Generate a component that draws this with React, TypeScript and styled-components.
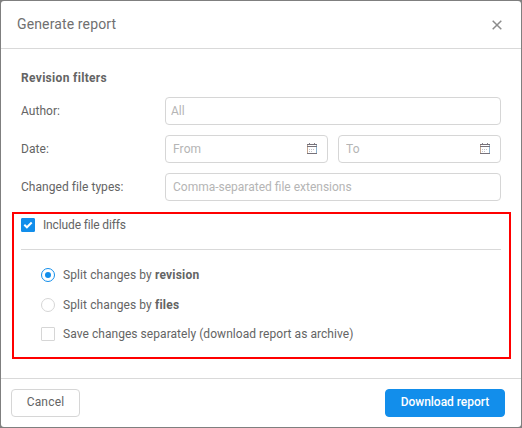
import React from "react";
import styled, { createGlobalStyle } from "styled-components";

const GlobalStyle = createGlobalStyle`
  *, *::before, *::after { box-sizing: border-box; }
  body { margin: 0; background: #7f7f7f; overflow: hidden; }
  button, input { font: inherit; letter-spacing: inherit; }
`;

const Backdrop = styled.div`
  height: 428px;
  padding: 1px;
  background: #7f7f7f;
`;

const Dialog = styled.section`
  display: flex;
  flex-direction: column;
  height: 426px;
  border-radius: 3px;
  background: #fff;
  color: #646464;
  font: 12px/16px Roboto, "Liberation Sans", sans-serif;
  letter-spacing: 0.05px;
`;

const Header = styled.header`
  display: flex;
  align-items: center;
  justify-content: space-between;
  height: 48px;
  padding: 0 18px 0 16px;
  border-bottom: 1px solid #d9d9d9;
`;

const Title = styled.h1`
  margin: 0;
  padding-bottom: 2px;
  font-size: 14px;
  font-weight: 400;
  letter-spacing: 0.13px;
  color: #707070;
`;

const CloseButton = styled.button`
  display: flex;
  padding: 0;
  border: 0;
  background: none;
  color: #8c8c8c;
`;

const Filters = styled.div`
  padding: 21px 20px 0 20px;
`;

const SectionTitle = styled.h2`
  margin: 0 0 11px;
  font-size: 12px;
  line-height: 16px;
  font-weight: 700;
  letter-spacing: 0.32px;
`;

const FieldRow = styled.div`
  display: grid;
  grid-template-columns: 144px minmax(0, 1fr);
  align-items: center;
  height: 28px;
  margin-bottom: 10px;
`;

const Controls = styled.div`
  display: flex;
  gap: 10px;
`;

const InputBox = styled.div<{ $inset?: number }>`
  display: flex;
  flex: 1;
  align-items: center;
  min-width: 0;
  height: 28px;
  padding: 0 9px 0 ${(p) => p.$inset ?? 7}px;
  border: 1px solid #d6d6d6;
  border-radius: 4px;
`;

const Input = styled.input<{ $tracking?: number }>`
  flex: 1;
  min-width: 0;
  width: 0;
  padding: 0;
  border: 0;
  outline: 0;
  background: none;
  letter-spacing: ${(p) => p.$tracking ?? 0}px;
  &::placeholder { color: #b5b5b5; opacity: 1; }
`;

const DiffPanel = styled.div`
  height: 147px;
  margin: 1px 10px 0 11px;
  padding: 4px 8px 0 7px;
  border: 2px solid #f00;
`;

const Option = styled.label<{ $gap?: number; $tracking?: number }>`
  display: flex;
  align-items: center;
  gap: 8px;
  height: 14px;
  margin-bottom: ${(p) => p.$gap ?? 0}px;
  letter-spacing: ${(p) => p.$tracking ?? 0.05}px;
  white-space: pre;
`;

const Strong = styled.b`
  letter-spacing: 0.2px;
`;

const Choices = styled.div`
  margin-top: 17px;
  padding: 18px 0 0 20px;
  border-top: 1px solid #d9d9d9;
`;

const Mark = styled.span<{ $round?: boolean; $on?: boolean }>`
  display: flex;
  align-items: center;
  justify-content: center;
  width: 14px;
  height: 14px;
  border: 1px solid ${(p) => (p.$on ? "#128eeb" : "#d6d6d6")};
  border-radius: ${(p) => (p.$round ? "50%" : "1px")};
  background: ${(p) => (p.$on && !p.$round ? "#128eeb" : "#fff")};
`;

const Dot = styled.span`
  width: 6px;
  height: 6px;
  border-radius: 50%;
  background: #128eeb;
`;

const Footer = styled.footer`
  display: flex;
  justify-content: space-between;
  margin-top: auto;
  height: 49px;
  padding: 10px 16px 0 10px;
  border-top: 1px solid #d9d9d9;
`;

const Button = styled.button<{ $primary?: boolean }>`
  width: ${(p) => (p.$primary ? 120 : 69)}px;
  height: 28px;
  padding: 0 0 2px;
  border: 1px solid ${(p) => (p.$primary ? "#128eeb" : "#d6d6d6")};
  border-radius: 4px;
  background: ${(p) => (p.$primary ? "#128eeb" : "#fff")};
  color: ${(p) => (p.$primary ? "#fff" : "#646464")};
  font-weight: ${(p) => (p.$primary ? 500 : 400)};
  letter-spacing: ${(p) => (p.$primary ? -0.03 : 0.2)}px;
`;

const CalendarIcon = () => (
  <svg width="12" height="12" viewBox="0 0 12 12" fill="none" shapeRendering="crispEdges">
    <path d="M1.5 1v10" stroke="#c3a58f" />
    <path d="M10.5 1v10" stroke="#8fb4d0" />
    <path d="M1 1.5h10M1 3.5h10M1 10.5h10" stroke="#77727a" />
    <path d="M3.5 0v1M8.5 0v1" stroke="#8a8790" />
    <path d="M3 6.5h6M3 8.5h4" stroke="#c3c4cc" strokeDasharray="1 1" />
  </svg>
);

const Checkmark = () => (
  <svg width="12" height="12" viewBox="0 0 12 12" fill="none">
    <path d="M2.3 5.8 4.9 8.3 9.7 3.5" stroke="#fff" strokeWidth="2" />
  </svg>
);

const DateField = ({ label }: { label: string }) => (
  <InputBox>
    <Input placeholder={label} $tracking={0.1} />
    <CalendarIcon />
  </InputBox>
);

export default function App() {
  return (
    <Backdrop>
      <GlobalStyle />
      <Dialog role="dialog">
        <Header>
          <Title>Generate report</Title>
          <CloseButton aria-label="Close">
            <svg width="12" height="12" viewBox="0 0 12 12" fill="none">
              <path d="m1.7 1.7 8.6 8.6M10.3 1.7l-8.6 8.6" stroke="currentColor" strokeWidth="1.5" />
            </svg>
          </CloseButton>
        </Header>
        <Filters>
          <SectionTitle>Revision filters</SectionTitle>
          <FieldRow>
            <span>Author:</span>
            <InputBox $inset={5}><Input placeholder="All" /></InputBox>
          </FieldRow>
          <FieldRow>
            <span>Date:</span>
            <Controls>
              <DateField label="From" />
              <DateField label="To" />
            </Controls>
          </FieldRow>
          <FieldRow>
            <span>Changed file types:</span>
            <InputBox><Input placeholder="Comma-separated file extensions" /></InputBox>
          </FieldRow>
        </Filters>
        <DiffPanel>
          <Option $tracking={-0.14}><Mark $on><Checkmark /></Mark>Include file diffs</Option>
          <Choices>
            <Option $gap={16} $tracking={0.1}>
              <Mark $round $on><Dot /></Mark>
              <span>Split changes by <Strong>revision</Strong></span>
            </Option>
            <Option $gap={15} $tracking={0.1}>
              <Mark $round />
              <span>Split changes by <Strong>files</Strong></span>
            </Option>
            <Option><Mark />Save changes separately (download report as archive)</Option>
          </Choices>
        </DiffPanel>
        <Footer>
          <Button>Cancel</Button>
          <Button $primary>Download report</Button>
        </Footer>
      </Dialog>
    </Backdrop>
  );
}
